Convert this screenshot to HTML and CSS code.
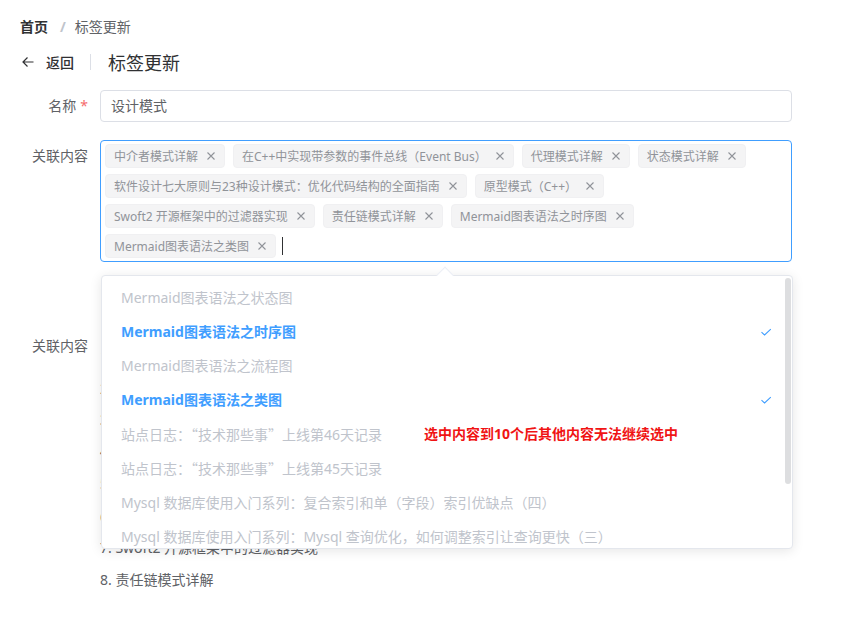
FILE: index.html
```html
<!DOCTYPE html>
<html lang="zh-CN">
<head>
<meta charset="utf-8">
<title>标签更新</title>
<link rel="stylesheet" href="styles.css">
</head>
<body>
<div class="page">
  <div class="breadcrumb">
    <span class="crumb-strong">首页</span>
    <span class="crumb-sep">/</span>
    <span class="crumb">标签更新</span>
  </div>

  <div class="page-header">
    <div class="back">
      <svg class="back-icon" width="12" height="12" viewBox="0 0 12 12"><path d="M1 6H11.5M5.5 1.5L1 6L5.5 10.5" fill="none" stroke="#303133" stroke-width="1.2"/></svg>
      <span class="back-text">返回</span>
    </div>
    <span class="header-divider"></span>
    <span class="header-title">标签更新</span>
  </div>

  <div class="form">
    <div class="form-item">
      <label class="label">名称<span class="req">*</span></label>
      <div class="control">
        <div class="input">设计模式</div>
      </div>
    </div>

    <div class="form-item form-item-select">
      <label class="label">关联内容</label>
      <div class="control select-control">
        <div class="select is-focus">
          <span class="tag">中介者模式详解<span class="tag-close"><svg width="16" height="16" viewBox="0 0 16 16"><path d="M4.5 4.5L11.5 11.5M11.5 4.5L4.5 11.5" stroke="#909399" stroke-width="1.1"/></svg></span></span>
          <span class="tag">在C++中实现带参数的事件总线<span class="cjk">（</span>Event Bus<span class="cjk">）</span><span class="tag-close"><svg width="16" height="16" viewBox="0 0 16 16"><path d="M4.5 4.5L11.5 11.5M11.5 4.5L4.5 11.5" stroke="#909399" stroke-width="1.1"/></svg></span></span>
          <span class="tag">代理模式详解<span class="tag-close"><svg width="16" height="16" viewBox="0 0 16 16"><path d="M4.5 4.5L11.5 11.5M11.5 4.5L4.5 11.5" stroke="#909399" stroke-width="1.1"/></svg></span></span>
          <span class="tag">状态模式详解<span class="tag-close"><svg width="16" height="16" viewBox="0 0 16 16"><path d="M4.5 4.5L11.5 11.5M11.5 4.5L4.5 11.5" stroke="#909399" stroke-width="1.1"/></svg></span></span>
          <span class="tag">软件设计七大原则与23种设计模式：优化代码结构的全面指南<span class="tag-close"><svg width="16" height="16" viewBox="0 0 16 16"><path d="M4.5 4.5L11.5 11.5M11.5 4.5L4.5 11.5" stroke="#909399" stroke-width="1.1"/></svg></span></span>
          <span class="tag">原型模式<span class="cjk">（</span>C++<span class="cjk">）</span><span class="tag-close"><svg width="16" height="16" viewBox="0 0 16 16"><path d="M4.5 4.5L11.5 11.5M11.5 4.5L4.5 11.5" stroke="#909399" stroke-width="1.1"/></svg></span></span>
          <span class="tag">Swoft2 开源框架中的过滤器实现<span class="tag-close"><svg width="16" height="16" viewBox="0 0 16 16"><path d="M4.5 4.5L11.5 11.5M11.5 4.5L4.5 11.5" stroke="#909399" stroke-width="1.1"/></svg></span></span>
          <span class="tag">责任链模式详解<span class="tag-close"><svg width="16" height="16" viewBox="0 0 16 16"><path d="M4.5 4.5L11.5 11.5M11.5 4.5L4.5 11.5" stroke="#909399" stroke-width="1.1"/></svg></span></span>
          <span class="tag">Mermaid图表语法之时序图<span class="tag-close"><svg width="16" height="16" viewBox="0 0 16 16"><path d="M4.5 4.5L11.5 11.5M11.5 4.5L4.5 11.5" stroke="#909399" stroke-width="1.1"/></svg></span></span>
          <span class="tag">Mermaid图表语法之类图<span class="tag-close"><svg width="16" height="16" viewBox="0 0 16 16"><path d="M4.5 4.5L11.5 11.5M11.5 4.5L4.5 11.5" stroke="#909399" stroke-width="1.1"/></svg></span></span>
          <span class="caret"></span>
        </div>

        <div class="dropdown">
          <span class="dropdown-arrow"></span>
          <div class="dropdown-wrap">
            <ul class="options">
              <li class="option disabled">Mermaid图表语法之状态图</li>
              <li class="option selected">Mermaid图表语法之时序图<svg class="check" width="12" height="12" viewBox="0 0 12 12"><path d="M1.5 6.2L4.6 9L10.8 3.2" fill="none" stroke="#409eff" stroke-width="1.1"/></svg></li>
              <li class="option disabled">Mermaid图表语法之流程图</li>
              <li class="option selected">Mermaid图表语法之类图<svg class="check" width="12" height="12" viewBox="0 0 12 12"><path d="M1.5 6.2L4.6 9L10.8 3.2" fill="none" stroke="#409eff" stroke-width="1.1"/></svg></li>
              <li class="option disabled">站点日志：<span class="cjk">“</span>技术那些事<span class="cjk">”</span>上线第46天记录<span class="note">选中内容到10个后其他内容无法继续选中</span></li>
              <li class="option disabled">站点日志：<span class="cjk">“</span>技术那些事<span class="cjk">”</span>上线第45天记录</li>
              <li class="option disabled">Mysql 数据库使用入门系列：复合索引和单<span class="cjk">（</span>字段<span class="cjk">）</span>索引优缺点<span class="cjk">（</span>四<span class="cjk">）</span></li>
              <li class="option disabled">Mysql 数据库使用入门系列：Mysql 查询优化，如何调整索引让查询更快<span class="cjk">（</span>三<span class="cjk">）</span></li>
              <li class="option disabled">Mysql 数据库使用入门系列：索引的类型与使用<span class="cjk">（</span>二<span class="cjk">）</span></li>
              <li class="option disabled">Mysql 数据库使用入门系列：基础语法<span class="cjk">（</span>一<span class="cjk">）</span></li>
            </ul>
          </div>
          <span class="scroll-thumb"></span>
        </div>
      </div>
    </div>

    <div class="form-item form-item-list">
      <label class="label">关联内容</label>
      <div class="control">
        <ol class="linked-list">
          <li>1. 中介者模式详解</li>
          <li>2. 在C++中实现带参数的事件总线<span class="cjk">（</span>Event Bus<span class="cjk">）</span></li>
          <li>3. 代理模式详解</li>
          <li>4. 状态模式详解</li>
          <li>5. 软件设计七大原则与23种设计模式：优化代码结构的全面指南</li>
          <li>6. 原型模式<span class="cjk">（</span>C++<span class="cjk">）</span></li>
          <li>7. Swoft2 开源框架中的过滤器实现</li>
          <li>8. 责任链模式详解</li>
        </ol>
      </div>
    </div>
  </div>
</div>
</body>
</html>
```

FILE: styles.css
```css
* { box-sizing: border-box; }
html, body { margin: 0; padding: 0; background: #fff; }
body {
  font-family: "Noto Sans", "Noto Sans CJK SC", sans-serif;
  color: #606266;
  font-size: 14px;
}
.cjk { font-family: "Noto Sans CJK SC", sans-serif; }
.page { padding: 20px; }

.breadcrumb {
  display: flex;
  align-items: center;
  height: 14px;
  line-height: 14px;
  font-size: 14px;
}
.crumb-strong { color: #303133; font-weight: 700; }
.crumb-sep { color: #c0c4cc; font-weight: 700; margin: 0 9px 0 12px; }
.crumb { color: #606266; }

.page-header {
  display: flex;
  align-items: center;
  height: 24px;
  margin-top: 16px;
}
.back { display: flex; align-items: center; color: #303133; }
.back-icon { margin-left: 2px; margin-right: 12px; }
.back-text { font-size: 14px; font-weight: 500; }
.header-divider {
  width: 1px;
  height: 16px;
  background: #dcdfe6;
  margin: 0 17px 0 16px;
}
.header-title { font-size: 18px; color: #303133; }

.form { margin-top: 16px; width: 772px; }
.form-item { display: flex; margin-bottom: 18px; }
.form-item-select { margin-bottom: 68px; }
.label {
  width: 80px;
  flex: none;
  padding-right: 12px;
  text-align: right;
  line-height: 32px;
  font-size: 14px;
  color: #606266;
}
.req { color: #f56c6c; margin-left: 4px; }
.control { flex: 1; min-width: 0; }

.input {
  height: 32px;
  line-height: 30px;
  border: 1px solid #dcdfe6;
  border-radius: 4px;
  padding: 0 10px;
  color: #606266;
}

.select-control { position: relative; }
.select {
  display: flex;
  flex-wrap: wrap;
  align-items: center;
  gap: 6px 8px;
  border: 1px solid #409eff;
  border-radius: 4px;
  padding: 3px 4px;
  min-height: 32px;
}
.tag {
  display: inline-flex;
  align-items: center;
  height: 24px;
  padding: 0 5px 0 8px;
  background: #f4f4f5;
  border: 1px solid #f0f0f2;
  border-radius: 4px;
  color: #909399;
  font-size: 12px;
  white-space: nowrap;
}
.tag-close { display: flex; width: 16px; height: 16px; margin-left: 5px; }
.caret {
  width: 1px;
  height: 18px;
  background: #303133;
  margin-left: -2px;
}

.dropdown {
  position: absolute;
  left: 1px;
  top: 135px;
  width: 692px;
  background: #fff;
  border: 1px solid #e4e7ed;
  border-radius: 4px;
  box-shadow: 0 2px 12px 0 rgba(0, 0, 0, 0.1);
  z-index: 10;
}
.dropdown-arrow {
  position: absolute;
  top: -7px;
  left: 337px;
  width: 12px;
  height: 12px;
  background: #fff;
  border-left: 1px solid #ebeef5;
  border-top: 1px solid #ebeef5;
  transform: rotate(45deg);
}
.dropdown-wrap {
  position: relative;
  height: 272px;
  overflow: hidden;
  border-radius: 4px;
}
.options { list-style: none; margin: 0; padding: 5px 0 0; }
.option {
  position: relative;
  height: 34px;
  line-height: 34px;
  padding: 0 20px 0 19px;
  font-size: 14px;
  white-space: nowrap;
  color: #606266;
}
.option.disabled { color: #c0c4cc; }
.option.selected { color: #409eff; font-weight: 700; }
.check { position: absolute; right: 20px; top: 11px; }
.note {
  position: absolute;
  left: 322px;
  top: 0;
  color: #f01414;
  font-weight: 700;
  font-size: 14px;
}
.scroll-thumb {
  position: absolute;
  right: 1px;
  top: 2px;
  width: 6px;
  height: 206px;
  border-radius: 3px;
  background: rgba(144, 147, 153, 0.3);
}

.linked-list {
  list-style: none;
  margin: 10px 0 0;
  padding: 0;
}
.linked-list li {
  line-height: 32px;
  height: 32px;
  font-size: 14px;
  color: #606266;
}
```
